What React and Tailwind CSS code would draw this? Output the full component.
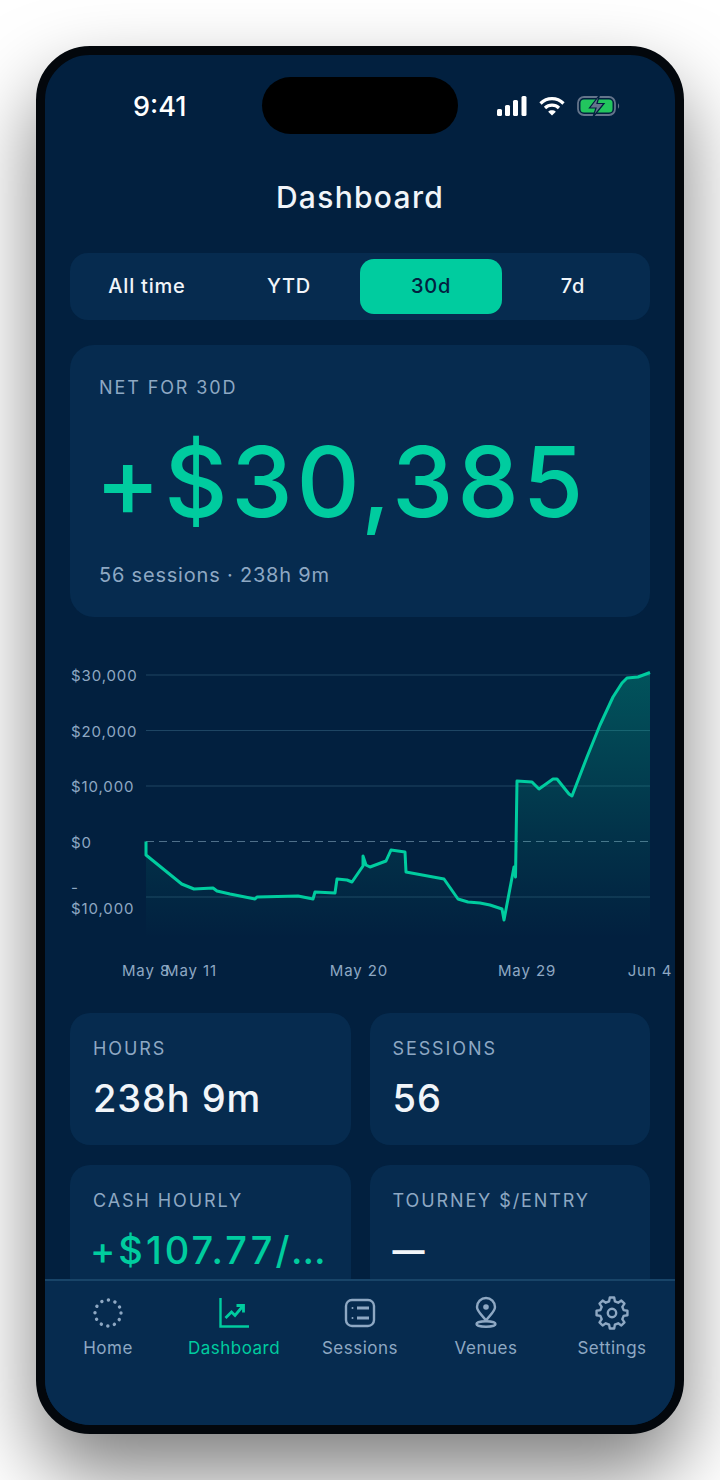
const line =
  "M146 841.5L146 855L181.7 884L194 889L213 888L217 891L230 894L255 899L257 897L298 896L313 899L315 892L335 893L337 879L347 880L352 882L363 866L363 856L366 865L370 867L386 861L391 850L405 852L406 872L444 879L458 899L468 902L480 903L490 905L502 909L504 920L514 867L515.5 877L517 781L532 782L539 789L553 779L557 779L569 794L572 796L587 757L600 725L613 697L622 683L627 678L638 677L650 672.5";

const tabs = [
  { label: "All time" },
  { label: "YTD" },
  { label: "30d", active: true },
  { label: "7d" },
];

const gridLines = [675, 730.5, 786, 897];
const yLabels = ["$30,000", "$20,000", "$10,000", "$0", "-\n$10,000"];
const xLabels = ["May 8", "May 11", "May 20", "May 29", "Jun 4"];

// 8 tooth gear outline around (17,17)
const gearPath = () => {
  const pts = [];
  for (let i = 0; i < 8; i++) {
    const a = (i * Math.PI) / 4 - Math.PI / 2;
    const step = Math.PI / 8;
    [
      [12, a - step * 0.62],
      [15.6, a - step * 0.36],
      [15.6, a + step * 0.36],
      [12, a + step * 0.62],
    ].forEach(([r, t]) => {
      pts.push(`${(17 + r * Math.cos(t)).toFixed(2)} ${(17 + r * Math.sin(t)).toFixed(2)}`);
    });
  }
  return "M" + pts.join("L") + "Z";
};

const HomeIcon = () => (
  <svg width="30" height="30" viewBox="0 0 30 30" fill="none">
    <circle cx="15" cy="15" r="13" stroke="currentColor" strokeWidth="3.4" strokeLinecap="round" strokeDasharray="0.1 6.707" />
  </svg>
);

const ChartIcon = () => (
  <svg width="30" height="32" viewBox="0 0 30 32" fill="none" stroke="currentColor" strokeWidth="2.4">
    <path d="M1.5 1v28.5h28.500" />
    <path d="M6.500 21l6-6 3.500 3.500 7.500-9" strokeWidth="2.8" />
    <path d="M17.500 8.500h7v7" strokeWidth="2.8" />
  </svg>
);

const SessionsIcon = () => (
  <svg width="32" height="30" viewBox="0 0 32 30" fill="none" stroke="currentColor" strokeWidth="2.4">
    <rect x="2" y="2" width="28" height="26" rx="6" />
    <path d="M13 10h12M13 20h12" strokeWidth="2.800" />
    <circle cx="8.500" cy="10" r="1" fill="currentColor" stroke="none" />
    <circle cx="8.500" cy="20" r="1" fill="currentColor" stroke="none" />
  </svg>
);

const VenueIcon = () => (
  <svg width="26" height="34" viewBox="0 0 26 34" fill="none" stroke="currentColor" strokeWidth="2.400">
    <path d="M13 24.500C9.500 19.500 4 15.500 4 11a9 9 0 0 1 18 0C22 15.500 16.500 19.500 13 24.500z" />
    <circle cx="13" cy="11" r="2.800" fill="currentColor" stroke="none" />
    <ellipse cx="13" cy="28" rx="9.500" ry="2.700" />
  </svg>
);

const GearIcon = () => (
  <svg width="34" height="34" viewBox="0 0 34 34" fill="none" stroke="currentColor" strokeWidth="2.400" strokeLinejoin="round">
    <path d={gearPath()} />
    <circle cx="17" cy="17" r="4.200" />
  </svg>
);

const StatusIcons = () => (
  <div className="flex items-center gap-[12px]">
    <svg width="30" height="20" viewBox="0 0 30 20" fill="#fff">
      <rect x="0" y="13" width="5" height="7" rx="1.500" />
      <rect x="8" y="9" width="5" height="11" rx="1.500" />
      <rect x="16" y="4" width="5" height="16" rx="1.500" />
      <rect x="24.500" y="0" width="5" height="20" rx="1.500" />
    </svg>
    <svg width="26" height="20" viewBox="0 0 26 20" fill="none" stroke="#fff" strokeWidth="3.200">
      <path d="M1.500 7.500C8 1 18 1 24.500 7.500" />
      <path d="M6 12c4-3.800 10-3.800 14 0" />
      <path d="M13 19.500l-3.800-3.800c2-1.800 5.600-1.800 7.600 0z" fill="#fff" stroke="none" />
    </svg>
    <svg width="44" height="24" viewBox="0 0 44 24" fill="none">
      <rect x="1" y="3" width="37" height="18" rx="6" stroke="#64748b" strokeWidth="1.800" />
      <rect x="3.500" y="5.500" width="32" height="13" rx="3.500" fill="#22c55e" />
      <path d="M41 9.500c1.500.5 1.500 4.500 0 5z" fill="#64748b" />
      <path d="M22.500 1L12.500 14h6.500l-3 9 11-13.500h-7z" fill="#64748b" stroke="#02203f" strokeWidth="1.200" />
    </svg>
  </div>
);

const navItems = [
  { label: "Home", icon: <HomeIcon /> },
  { label: "Dashboard", icon: <ChartIcon />, active: true },
  { label: "Sessions", icon: <SessionsIcon /> },
  { label: "Venues", icon: <VenueIcon /> },
  { label: "Settings", icon: <GearIcon /> },
];

const Chart = () => (
  <div className="mt-[30px]">
    <div className="flex h-[303px]">
      <div className="w-[101px] shrink-0 pl-[26px] pt-[1px]">
        {yLabels.map((label) => (
          <div key={label} className="h-[55.5px] flex items-center text-[15px] leading-[21px] tracking-[0.9px] text-[#8ea8c3] whitespace-pre-line">
            <span>{label}</span>
          </div>
        ))}
      </div>
      {/* viewBox uses the screenshot's own coordinates */}
      <svg width="504" height="303" viewBox="146 647 504 303" fill="none" className="overflow-visible">
        <defs>
          <linearGradient id="area" gradientUnits="userSpaceOnUse" x1="0" y1="672" x2="0" y2="938">
            <stop offset="0" stopColor="#00cc9f" stopOpacity="0.3" />
            <stop offset="0.6" stopColor="#00cc9f" stopOpacity="0.11" />
            <stop offset="1" stopColor="#00cc9f" stopOpacity="0" />
          </linearGradient>
        </defs>
        {gridLines.map((y) => (
          <line key={y} x1="146" x2="650" y1={y} y2={y} stroke="#1e4563" strokeWidth="1.200" />
        ))}
        <line x1="146" x2="650" y1="841.500" y2="841.500" stroke="#4f6f8a" strokeWidth="1.200" strokeDasharray="8 5" />
        <path d={line + "L650 938L146 938Z"} fill="url(#area)" />
        <path d={line} stroke="#00cc9f" strokeWidth="3" strokeLinejoin="round" />
      </svg>
    </div>
    {/* labels are centred on their tick, May 8 runs into May 11 as in the app */}
    <div className="grid grid-cols-[45px_168px_168px_123px_0px] pl-[101px] pt-[12px]">
      {xLabels.map((label) => (
        <div key={label} className="w-0 flex justify-center whitespace-nowrap text-[15px] leading-[18px] tracking-[0.9px] text-[#8ea8c3]">
          {label}
        </div>
      ))}
    </div>
  </div>
);

const StatCard = ({ label, value, green, dash }) => (
  <div className="rounded-[20px] bg-[#062b4f] pl-[23px] pr-[20px] pt-[25px] h-[132px] overflow-hidden">
    <p className="text-[18px] leading-[22px] tracking-[1.900px] text-[#8ea8c3] whitespace-nowrap">{label}</p>
    {green && (
      <p className="mt-[15px] -ml-[3px] text-[38px] leading-[46px] font-medium tracking-[3px] text-[#00cc9f] whitespace-nowrap">{value}</p>
    )}
    {dash && <p className="mt-[16px] text-[32px] leading-[46px] font-bold text-[#f1f5f9]">{value}</p>}
    {!green && !dash && (
      <p className="mt-[15px] text-[38px] leading-[46px] font-medium tracking-[0.900px] text-[#f1f5f9] whitespace-nowrap">{value}</p>
    )}
  </div>
);

export default function App() {
  return (
    <div className="w-[720px] h-[1480px] bg-white flex justify-center pt-[46px] font-['Inter',sans-serif] overflow-hidden">
      <div className="w-[648px] h-[1388px] rounded-[54px] border-[9px] border-[#03070c] bg-[#02203f] overflow-hidden flex flex-col shadow-[0_40px_80px_rgba(0,0,0,0.5)]">
        <div className="flex-1 min-h-0 overflow-hidden">
          <div className="h-[104px] pt-[22px] flex items-start">
            <span className="w-[217px] shrink-0 pl-[88px] pt-[13px] text-[27px] leading-[34px] font-medium text-white">9:41</span>
            <div className="w-[196px] h-[57px] shrink-0 rounded-full bg-black" />
            <div className="pl-[39px] pt-[17px]">
              <StatusIcons />
            </div>
          </div>
          <h1 className="text-center text-[30px] leading-[38px] font-medium tracking-[1.300px] text-[#f1f5f9] mt-[19px]">Dashboard</h1>

          <div className="px-[25px]">
            <div className="mt-[37px] h-[67px] rounded-[18px] bg-[#062b4f] p-[6px] grid grid-cols-4 gap-0">
              {tabs.map((tab) => (
                <div
                  key={tab.label}
                  className={`flex items-center justify-center rounded-[14px] pb-[2px] text-[20px] font-medium tracking-[0.800px] ${tab.active ? "bg-[#00cc9f] text-[#02203f]" : "text-[#f1f5f9]"}`}
                >
                  {tab.label}
                </div>
              ))}
            </div>

            <div className="mt-[25px] h-[272px] rounded-[24px] bg-[#062b4f] pl-[29px] pt-[31px]">
              <p className="text-[18px] leading-[24px] tracking-[1.900px] text-[#8ea8c3]">NET FOR 30D</p>
              <p className="mt-[24px] -ml-[4px] text-[98px] leading-[116px] font-medium tracking-[3.800px] text-[#00cc9f] whitespace-nowrap">+$30,385</p>
              <p className="mt-[22px] text-[20px] leading-[26px] tracking-[0.800px] text-[#8ea8c3]">56 sessions · 238h 9m</p>
            </div>
          </div>

          <Chart />

          <div className="px-[25px] mt-[33px] grid grid-cols-2 gap-x-[19px] gap-y-[20px]">
            <StatCard label="HOURS" value="238h 9m" />
            <StatCard label="SESSIONS" value="56" />
            <StatCard label="CASH HOURLY" value="+$107.77/…" green />
            <StatCard label="TOURNEY $/ENTRY" value="—" dash />
          </div>
        </div>

        <div className="h-[146px] shrink-0 bg-[#062b4f] border-t-2 border-[#184468] grid grid-cols-5 pt-[14px]">
          {navItems.map((item) => (
            <div key={item.label} className={`flex flex-col items-center ${item.active ? "text-[#00cc9f]" : "text-[#8ea8c3]"}`}>
              <div className="h-[36px] flex items-center justify-center">{item.icon}</div>
              <span className="mt-[6px] text-[17px] leading-[22px] tracking-[0.500px]">{item.label}</span>
            </div>
          ))}
        </div>
      </div>
    </div>
  );
}
